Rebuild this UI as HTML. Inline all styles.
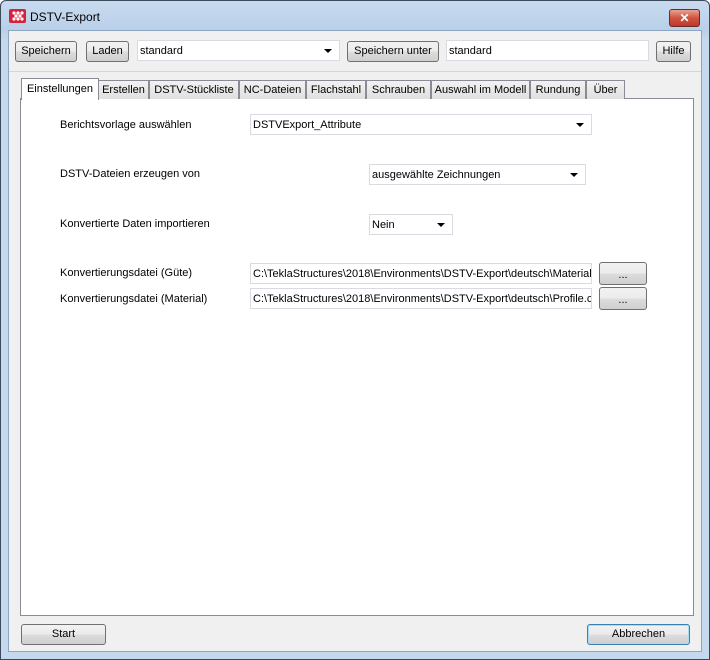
<!DOCTYPE html>
<html><head><meta charset="utf-8"><style>
*{box-sizing:border-box;margin:0;padding:0}
body{width:710px;height:660px;overflow:hidden;font-family:"Liberation Sans",sans-serif;font-size:11px;color:#000;background:#fff;position:relative}
.win{position:absolute;left:0;top:0;width:710px;height:660px;border-radius:6px 6px 0 0;box-shadow:inset 0 0 0 1px #3c4b5c;background:linear-gradient(#c9dbef,#b9d0ea 30px,#c4d8ee 40px);}
.client{position:absolute;left:8px;top:30px;width:694px;height:622px;background:#f0f0f0;border:1px solid #8ea5c0}
.a{position:absolute}
.btn{position:absolute;border:1px solid #707070;border-radius:3px;background:linear-gradient(#f2f2f2,#ebebeb 50%,#dddddd 50%,#cfcfcf);text-align:center;line-height:18px;font-size:11px}
.combo,.tf{position:absolute;background:#fff;border:1px solid #d8dce2;padding-left:2px;line-height:20px;white-space:nowrap;overflow:hidden}
.combo:after{content:"";position:absolute;right:7px;top:8px;border-left:4px solid transparent;border-right:4px solid transparent;border-top:4px solid #000}
.tab{position:absolute;top:80px;height:19px;border:1px solid #898c95;border-bottom:none;background:linear-gradient(#f2f2f2,#e0e0e0);text-align:center;line-height:18px}
.panel{position:absolute;left:20px;top:98px;width:674px;height:518px;background:#fff;border:1px solid #898c95}
.lbl{position:absolute;left:60px}
</style></head><body>
<div class="win"></div>
<svg class="a" style="left:9px;top:9px" width="17" height="14" viewBox="0 0 17 14"><rect x="0" y="0" width="17" height="14" rx="2" fill="#d8203a"/><g fill="#fff"><circle cx="5" cy="4" r="1.6"/><circle cx="9" cy="4" r="1.6"/><circle cx="13" cy="4" r="1.6"/><circle cx="7" cy="7" r="1.6"/><circle cx="11" cy="7" r="1.6"/><circle cx="5" cy="10" r="1.6"/><circle cx="9" cy="10" r="1.6"/><circle cx="13" cy="10" r="1.6"/></g></svg>
<div class="a" style="left:30px;top:10px;font-size:12px">DSTV-Export</div>
<div class="a" style="left:669px;top:9px;width:31px;height:18px;border:1px solid #6b2a24;border-radius:3px;background:linear-gradient(#e8a193,#d0533f 50%,#c0392b);color:#fff;text-align:center;font-weight:bold;font-size:12px;line-height:16px">✕</div>
<div class="client"></div>
<div class="a" style="left:9px;top:71px;width:692px;height:1px;background:#d6d6d6"></div>
<div class="btn" style="left:15px;top:41px;width:62px;height:21px">Speichern</div>
<div class="btn" style="left:86px;top:41px;width:43px;height:21px">Laden</div>
<div class="combo" style="left:137px;top:40px;width:203px;height:21px">standard</div>
<div class="btn" style="left:347px;top:41px;width:92px;height:21px">Speichern unter</div>
<div class="tf" style="left:446px;top:40px;width:203px;height:21px">standard</div>
<div class="btn" style="left:656px;top:41px;width:35px;height:21px">Hilfe</div>
<div class="panel"></div>
<div class="tab" style="left:98px;width:51px">Erstellen</div>
<div class="tab" style="left:149px;width:90px">DSTV-Stückliste</div>
<div class="tab" style="left:239px;width:67px">NC-Dateien</div>
<div class="tab" style="left:306px;width:60px">Flachstahl</div>
<div class="tab" style="left:366px;width:65px">Schrauben</div>
<div class="tab" style="left:431px;width:99px">Auswahl im Modell</div>
<div class="tab" style="left:530px;width:56px">Rundung</div>
<div class="tab" style="left:586px;width:39px">Über</div>
<div class="tab" style="left:21px;top:78px;width:78px;height:22px;background:#fff;line-height:20px;z-index:2">Einstellungen</div>
<div class="lbl" style="top:119px">Berichtsvorlage auswählen</div>
<div class="lbl" style="top:168px">DSTV-Dateien erzeugen von</div>
<div class="lbl" style="top:218px">Konvertierte Daten importieren</div>
<div class="lbl" style="top:267px">Konvertierungsdatei (Güte)</div>
<div class="lbl" style="top:293px">Konvertierungsdatei (Material)</div>
<div class="combo" style="left:250px;top:114px;width:342px;height:21px">DSTVExport_Attribute</div>
<div class="combo" style="left:369px;top:164px;width:217px;height:21px">ausgewählte Zeichnungen</div>
<div class="combo" style="left:369px;top:214px;width:84px;height:21px">Nein</div>
<div class="tf" style="left:250px;top:263px;width:342px;height:21px">C:\TeklaStructures\2018\Environments\DSTV-Export\deutsch\Material.cnv</div>
<div class="tf" style="left:250px;top:288px;width:342px;height:21px">C:\TeklaStructures\2018\Environments\DSTV-Export\deutsch\Profile.cnv</div>
<div class="btn" style="left:599px;top:262px;width:48px;height:23px;line-height:24px">...</div>
<div class="btn" style="left:599px;top:287px;width:48px;height:23px;line-height:24px">...</div>
<div class="btn" style="left:21px;top:624px;width:85px;height:21px">Start</div>
<div class="btn" style="left:587px;top:624px;width:103px;height:21px;border-color:#3c7fb1;box-shadow:inset 0 0 0 1px #a6dcf5">Abbrechen</div>
</body></html>
